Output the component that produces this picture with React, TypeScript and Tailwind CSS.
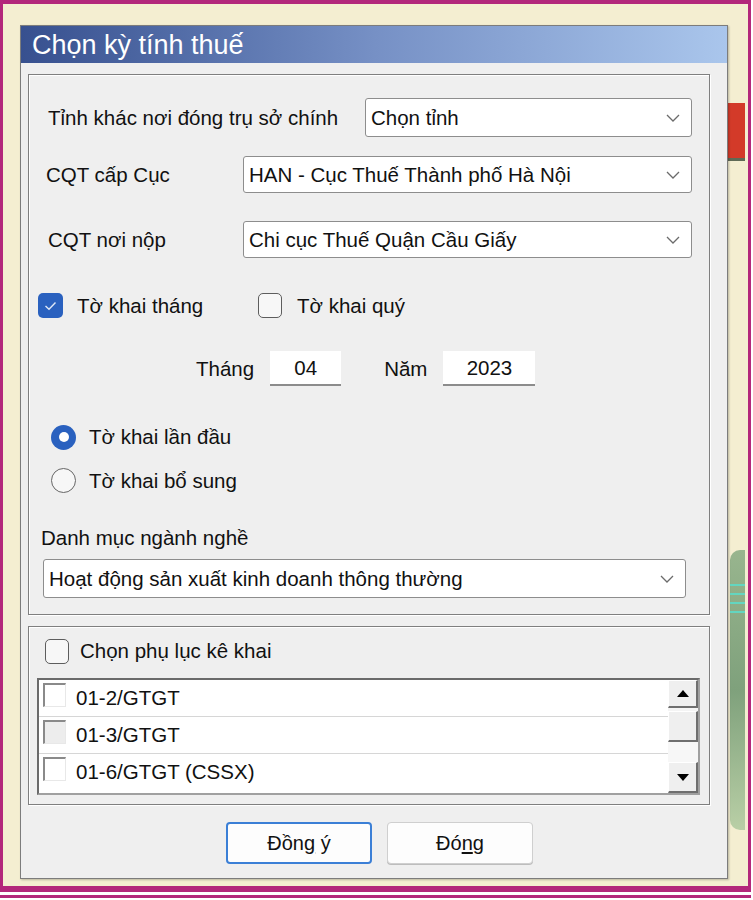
import React from "react";

const font = "font-['Liberation_Sans',Arial,sans-serif]";

function Chevron() {
  return (
    <svg width="14" height="8" viewBox="0 0 14 8" className="shrink-0">
      <polyline points="1,1 7,7 13,1" fill="none" stroke="#6b6b6b" strokeWidth="1.3" />
    </svg>
  );
}

function Select({ value, className }: { value: string; className: string }) {
  return (
    <div
      className={`flex items-center justify-between rounded-[3px] border border-[#8d8d8d] bg-white pl-[5px] pr-[11px] ${className}`}
    >
      <span className="text-[#111]">{value}</span>
      <Chevron />
    </div>
  );
}

function CheckBox({ checked }: { checked?: boolean }) {
  if (checked) {
    return (
      <div className="flex h-[25px] w-[25px] items-center justify-center rounded-[5px] bg-[#2a61bf]">
        <svg width="13" height="10" viewBox="0 0 13 10">
          <polyline points="1.5,5 5,8.3 11.5,1.5" fill="none" stroke="#dfe8f7" strokeWidth="1.4" />
        </svg>
      </div>
    );
  }
  return <div className="h-[25px] w-[24px] rounded-[5px] border-[1.5px] border-[#5d5d5d] bg-[#f7f7f7]" />;
}

function Radio({ checked }: { checked?: boolean }) {
  if (checked) {
    return (
      <div className="flex h-[25px] w-[25px] items-center justify-center rounded-full bg-[#2a61bf]">
        <div className="h-[10px] w-[10px] rounded-full bg-white" />
      </div>
    );
  }
  return <div className="h-[25px] w-[25px] rounded-full border-[1.5px] border-[#666] bg-[#f7f7f7]" />;
}

function ClassicCheck({ disabled }: { disabled?: boolean }) {
  return (
    <div
      className={`h-[24px] w-[23px] border-t-2 border-l-2 border-r border-b border-t-[#8a8a8a] border-l-[#8a8a8a] border-r-[#e8e8e8] border-b-[#e8e8e8] ${
        disabled ? "bg-[#ededed]" : "bg-white"
      }`}
    />
  );
}

function Raised({ className, children }: { className: string; children?: React.ReactNode }) {
  return (
    <div
      className={`flex items-center justify-center border-t border-l border-r-2 border-b-2 border-t-white border-l-white border-r-[#6f6f6f] border-b-[#6f6f6f] bg-[#efefef] ${className}`}
    >
      {children}
    </div>
  );
}

const items = [
  { code: "01-2/GTGT", disabled: false },
  { code: "01-3/GTGT", disabled: true },
  { code: "01-6/GTGT (CSSX)", disabled: false },
];

export default function App() {
  return (
    <div className={`${font} h-[900px] w-[753px] bg-white text-[20.5px] leading-[24px] text-[#111]`}>
      <div className="relative h-[892px] w-[751px] border-t-4 border-l-[3px] border-r-[3px] border-b-[6px] border-[#b3277b] bg-[#f4eed1]">
        {/* background pieces peeking out at the right */}
        <div className="absolute left-[725px] top-[99px] h-[55px] w-[17px] bg-[#d33a29] shadow-[0_3px_0_#5f6a55]" />
        <div className="absolute left-[727px] top-[546px] h-[280px] w-[15px] rounded-l-[10px] bg-linear-to-b from-[#98b58e] via-[#7fa17c] to-[#b9cfa6]" />
        <div className="absolute left-[727px] top-[580px] flex w-[15px] flex-col gap-[7px]">
          <div className="h-[2px] bg-[#63d6c0]" />
          <div className="h-[2px] bg-[#63d6c0]" />
          <div className="h-[2px] bg-[#63d6c0]" />
          <div className="h-[2px] bg-[#63d6c0]" />
        </div>

        <div className="relative ml-[17px] mt-[21px] flex h-[854px] w-[708px] flex-col border border-[#7c7c7c] bg-[#efefef] shadow-[1px_1px_2px_rgba(0,0,0,0.25)]">
          <div className="flex h-[37px] items-center bg-linear-to-r from-[#37508f] via-[#7690c5] to-[#aac6ec] pl-[11px]">
            <span className="text-[27px] leading-[30px] text-white">Chọn kỳ tính thuế</span>
          </div>

          {/* main group */}
          <div className="ml-[7px] mt-[11px] flex h-[541px] w-[682px] flex-col border border-[#7f7f7f] shadow-[inset_1px_1px_0_#fff,1px_1px_0_#fff]">
            <div className="mt-[23px] flex items-center pr-[17px]">
              <span className="pl-[19px]">Tỉnh khác nơi đóng trụ sở chính</span>
              <Select value="Chọn tỉnh" className="ml-auto h-[39px] w-[327px]" />
            </div>
            <div className="mt-[19px] flex items-center pr-[17px]">
              <span className="pl-[17px]">CQT cấp Cục</span>
              <Select value="HAN - Cục Thuế Thành phố Hà Nội" className="ml-auto h-[37px] w-[449px]" />
            </div>
            <div className="mt-[28px] flex items-center pr-[17px]">
              <span className="pl-[19px]">CQT nơi nộp</span>
              <Select value="Chi cục Thuế Quận Cầu Giấy" className="ml-auto h-[37px] w-[449px]" />
            </div>

            <div className="mt-[35px] flex h-[25px] items-center pl-[9px]">
              <div className="flex w-[220px] items-center gap-[14px]">
                <CheckBox checked />
                <span>Tờ khai tháng</span>
              </div>
              <div className="flex items-center gap-[15px]">
                <CheckBox />
                <span>Tờ khai quý</span>
              </div>
            </div>

            <div className="mt-[33px] flex h-[35px] items-center pl-[167px]">
              <span>Tháng</span>
              <div className="ml-[16px] flex h-[35px] w-[71px] items-center justify-center border-b-2 border-[#8c8c8c] bg-white">
                04
              </div>
              <span className="ml-[43px]">Năm</span>
              <div className="ml-[16px] flex h-[35px] w-[92px] items-center justify-center border-b-2 border-[#8c8c8c] bg-white">
                2023
              </div>
            </div>

            <div className="mt-[39px] flex h-[24px] items-center gap-[13px] pl-[22px]">
              <Radio checked />
              <span>Tờ khai lần đầu</span>
            </div>
            <div className="mt-[19px] flex h-[25px] items-center gap-[13px] pl-[22px]">
              <Radio />
              <span>Tờ khai bổ sung</span>
            </div>

            <div className="mt-[33px] h-[24px] pl-[12px]">Danh mục ngành nghề</div>
            <Select
              value="Hoạt động sản xuất kinh doanh thông thường"
              className="ml-[14px] mt-[9px] h-[39px] w-[643px]"
            />
          </div>

          {/* appendix group */}
          <div className="ml-[7px] mt-[11px] flex h-[179px] w-[682px] flex-col border border-[#7f7f7f] shadow-[inset_1px_1px_0_#fff,1px_1px_0_#fff]">
            <div className="ml-[16px] mt-[12px] flex h-[24px] items-center gap-[11px]">
              <CheckBox />
              <span>Chọn phụ lục kê khai</span>
            </div>
            <div className="ml-[8px] mt-[15px] flex h-[117px] w-[663px] border-2 border-t-[#6a6a6a] border-l-[#6a6a6a] border-r-[#a0a0a0] border-b-[#a0a0a0] bg-white">
              <div className="flex flex-1 flex-col">
                {items.map((it, i) => (
                  <div
                    key={it.code}
                    className={`flex h-[37px] items-start gap-[10px] pl-[4px] pt-[3px] ${
                      i < items.length - 1 ? "border-b border-[#d6d6d6]" : ""
                    }`}
                  >
                    <ClassicCheck disabled={it.disabled} />
                    <span className="pt-[3px]">{it.code}</span>
                  </div>
                ))}
              </div>
              <div className="flex w-[30px] flex-col bg-[#f4f4f4]">
                <Raised className="h-[28px]">
                  <svg width="12" height="7" viewBox="0 0 12 7">
                    <polygon points="6,0 12,7 0,7" fill="#000" />
                  </svg>
                </Raised>
                <div className="h-[3px]" />
                <Raised className="h-[31px]" />
                <div className="h-[20px] bg-[#f7f7f7]" />
                <Raised className="h-[31px]">
                  <svg width="12" height="7" viewBox="0 0 12 7">
                    <polygon points="0,0 12,0 6,7" fill="#000" />
                  </svg>
                </Raised>
              </div>
            </div>
          </div>

          <div className="ml-[205px] mt-[17px] flex gap-[15px]">
            <button className="flex h-[42px] w-[146px] items-center justify-center rounded-[4px] border-2 border-[#3b7fd6] bg-[#fdfdfd] text-[20px] text-[#111]">
              <span>
                Đồn<span className="underline underline-offset-2">g</span> ý
              </span>
            </button>
            <button className="flex h-[42px] w-[146px] items-center justify-center rounded-[4px] border border-[#cfcfcf] bg-[#fdfdfd] text-[20px] text-[#111] shadow-[0_1px_0_#bdbdbd]">
              <span>
                Đó<span className="underline underline-offset-2">n</span>g
              </span>
            </button>
          </div>
        </div>
      </div>
      <div className="mt-[3px] h-[3px] w-[751px] bg-[#b3277b]" />
    </div>
  );
}
